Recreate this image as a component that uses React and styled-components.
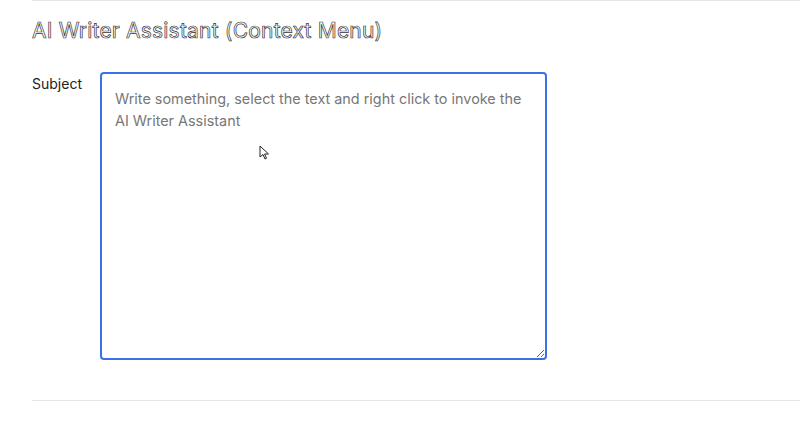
import React from "react";
import styled, { createGlobalStyle } from "styled-components";

const GlobalStyle = createGlobalStyle`
  html, body {
    margin: 0;
    padding: 0;
    background: #ffffff;
    font-family: Inter, "Noto Sans", sans-serif;
    -webkit-font-smoothing: antialiased;
  }
`;

const Page = styled.div`
  padding-left: 32px;
`;

const Section = styled.section`
  border-top: 1px solid #e6e6e6;
  border-bottom: 1px solid #e6e6e6;
  padding: 16px 0 40px;
`;

const Title = styled.h2`
  margin: 0 0 27px;
  font-size: 21px;
  line-height: 28px;
  font-weight: 400;
  color: #ffffff;
  -webkit-text-stroke: 0.7px #333;
  letter-spacing: 0.2px;
`;

const FieldRow = styled.div`
  display: flex;
  align-items: flex-start;
  gap: 20px;
`;

const Label = styled.label`
  width: 48px;
  padding-top: 2px;
  font-size: 14px;
  line-height: 20px;
  color: #222;
`;

const EditorWrap = styled.div`
  position: relative;
`;

const Editor = styled.textarea`
  display: block;
  box-sizing: border-box;
  width: 447px;
  height: 288px;
  margin: 0;
  padding: 14px 13px;
  border: 2px solid #3a72e6;
  border-radius: 4px;
  outline: none;
  font-family: Inter, "Noto Sans", sans-serif;
  font-size: 14.4px;
  line-height: 22px;
  color: #333;
  resize: both;

  &::placeholder {
    color: #777;
  }
`;

const Pointer = styled.svg`
  position: absolute;
  left: 159px;
  top: 73px;
  pointer-events: none;
`;

export default function App() {
  return (
    <>
      <GlobalStyle />
      <Page>
        <Section>
          <Title>AI Writer Assistant (Context Menu)</Title>
          <FieldRow>
            <Label>Subject</Label>
            <EditorWrap>
              <Editor placeholder="Write something, select the text and right click to invoke the AI Writer Assistant" />
              <Pointer width="12" height="16" viewBox="0 0 12 16">
                <path d="M1 1 L1 12 L4 9.5 L6 14 L7.5 13.3 L5.6 9 L9.5 9 Z" fill="#fff" stroke="#222" strokeWidth="1" strokeLinejoin="round" />
              </Pointer>
            </EditorWrap>
          </FieldRow>
        </Section>
      </Page>
    </>
  );
}
